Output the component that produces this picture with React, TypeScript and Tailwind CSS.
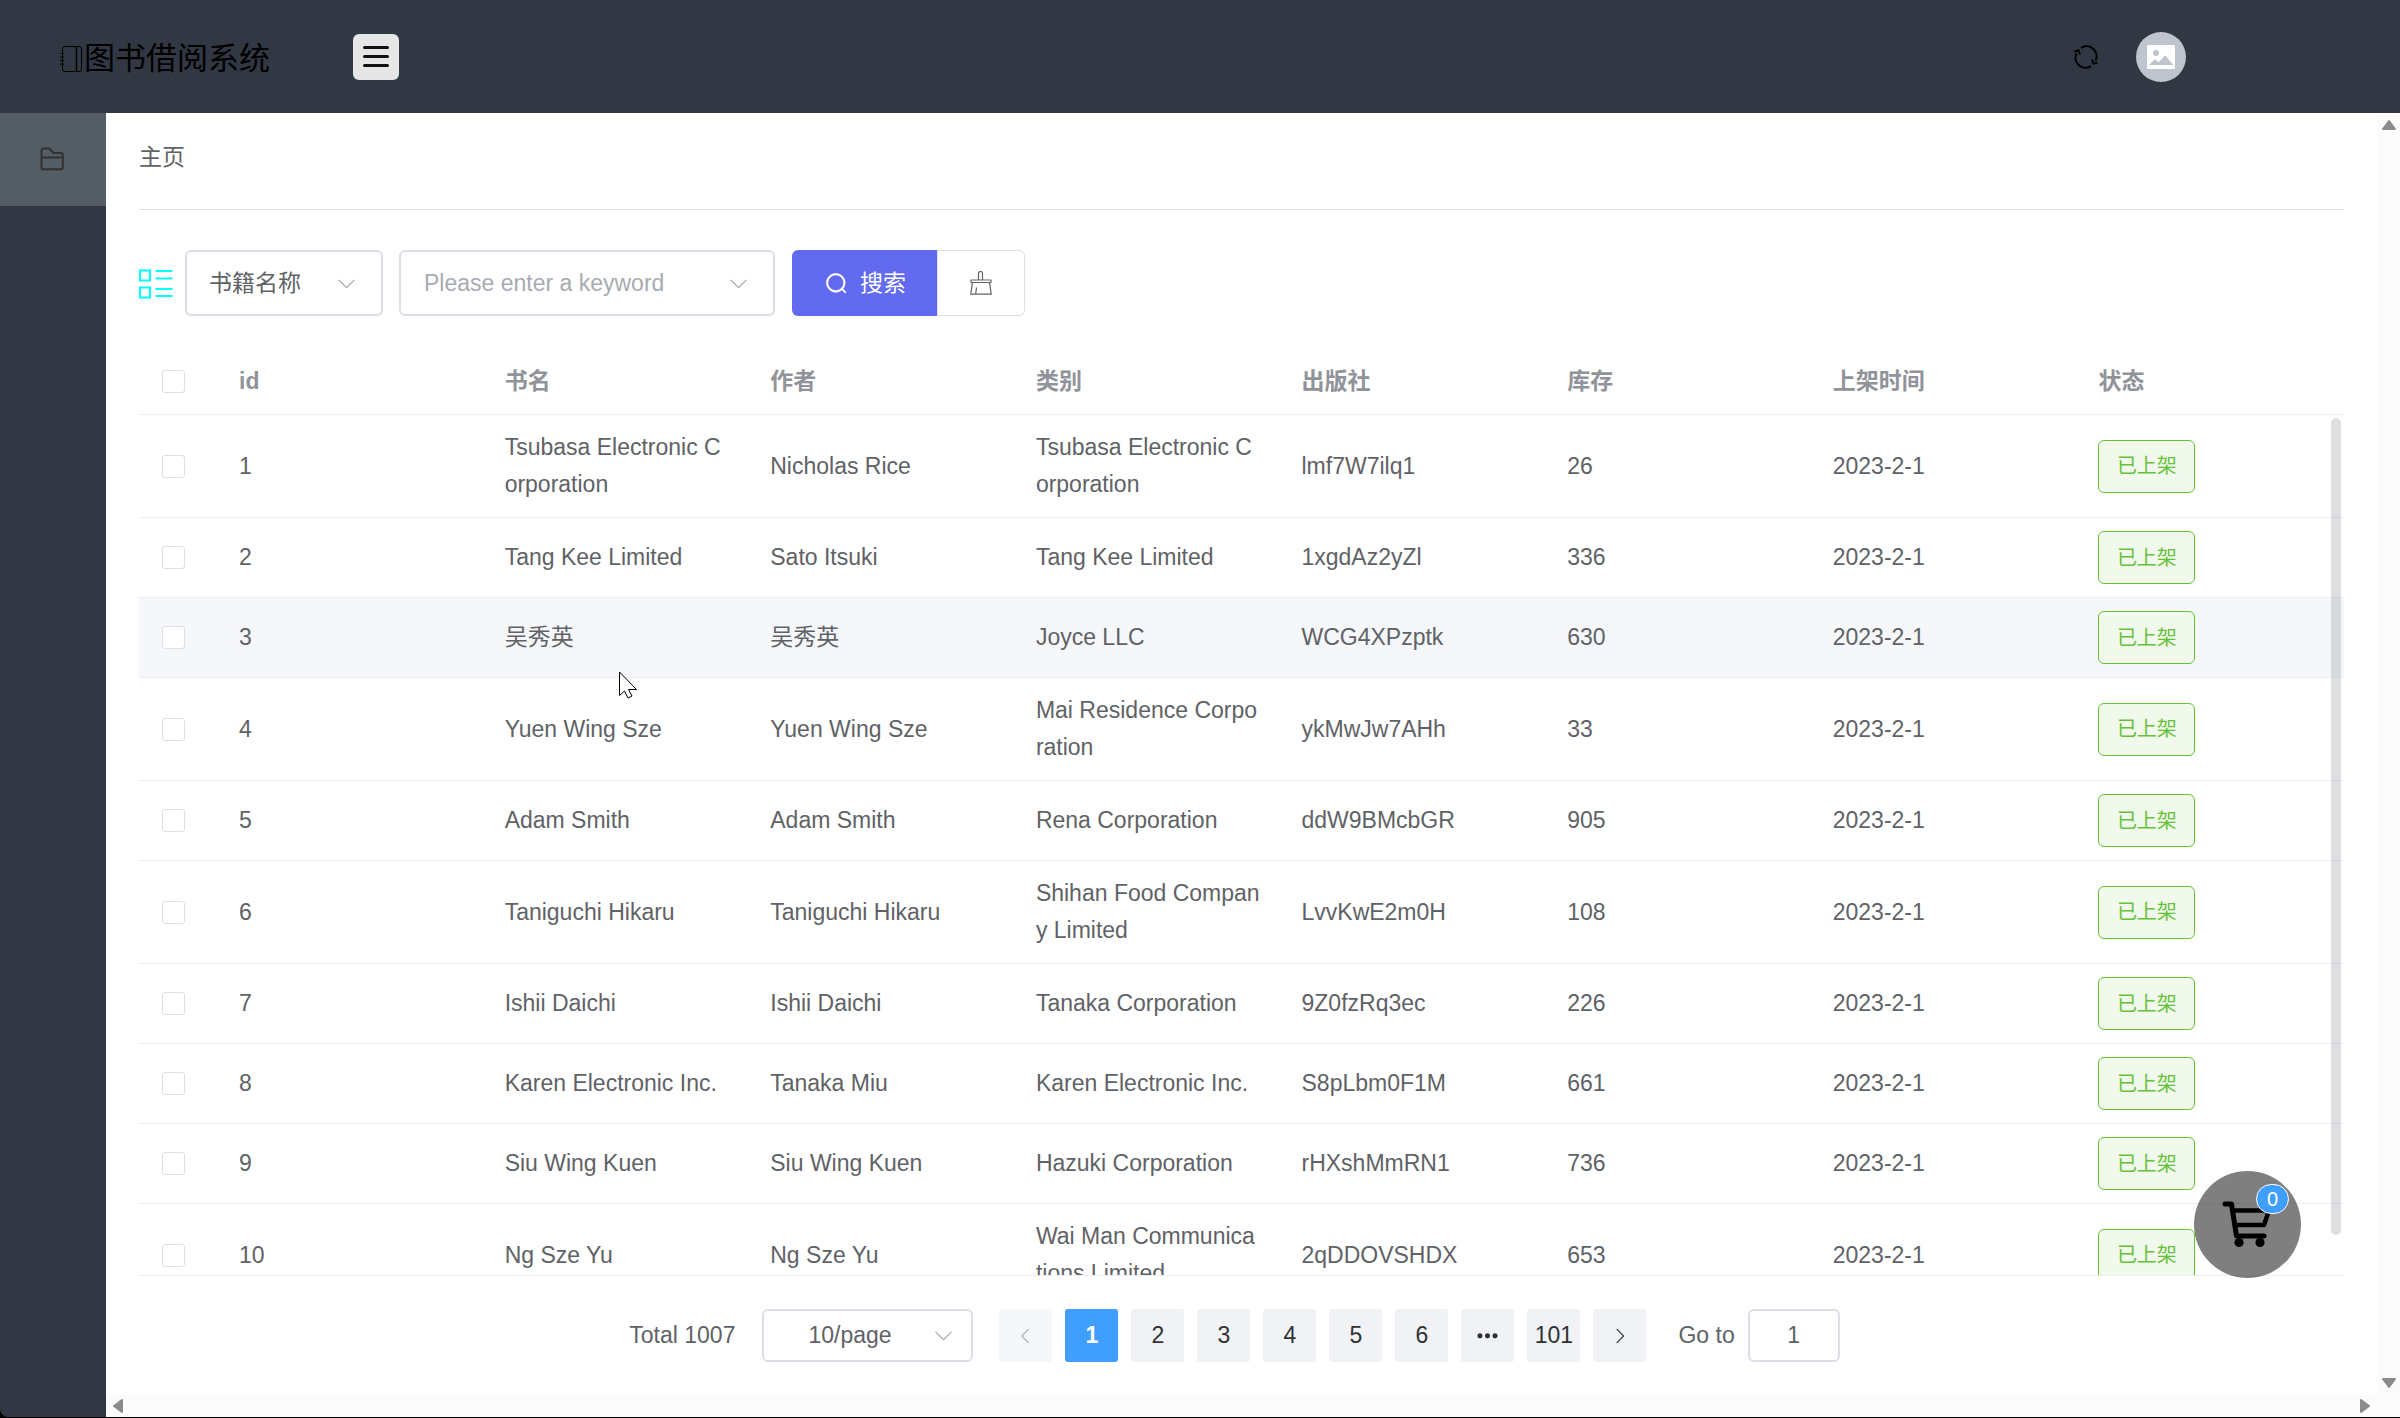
import React from "react";

const FONT = "font-['Liberation_Sans','Noto_Sans_CJK_SC',sans-serif]";

const COLUMNS = ["id", "书名", "作者", "类别", "出版社", "库存", "上架时间", "状态"];

const ROWS = [
  ["1", "Tsubasa Electronic Corporation", "Nicholas Rice", "Tsubasa Electronic Corporation", "lmf7W7ilq1", "26"],
  ["2", "Tang Kee Limited", "Sato Itsuki", "Tang Kee Limited", "1xgdAz2yZl", "336"],
  ["3", "吴秀英", "吴秀英", "Joyce LLC", "WCG4XPzptk", "630"],
  ["4", "Yuen Wing Sze", "Yuen Wing Sze", "Mai Residence Corporation", "ykMwJw7AHh", "33"],
  ["5", "Adam Smith", "Adam Smith", "Rena Corporation", "ddW9BMcbGR", "905"],
  ["6", "Taniguchi Hikaru", "Taniguchi Hikaru", "Shihan Food Company Limited", "LvvKwE2m0H", "108"],
  ["7", "Ishii Daichi", "Ishii Daichi", "Tanaka Corporation", "9Z0fzRq3ec", "226"],
  ["8", "Karen Electronic Inc.", "Tanaka Miu", "Karen Electronic Inc.", "S8pLbm0F1M", "661"],
  ["9", "Siu Wing Kuen", "Siu Wing Kuen", "Hazuki Corporation", "rHXshMmRN1", "736"],
  ["10", "Ng Sze Yu", "Ng Sze Yu", "Wai Man Communications Limited", "2qDDOVSHDX", "653"],
];

const PATHS = {
  down: "M831.872 340.864 512 652.672 192.128 340.864a30.592 30.592 0 0 0-42.752 0 29.12 29.12 0 0 0 0 41.6L489.664 714.24a32 32 0 0 0 44.672 0l340.288-331.712a29.12 29.12 0 0 0 0-41.728 30.592 30.592 0 0 0-42.752 0z",
  left: "M609.408 149.376 277.76 489.6a32 32 0 0 0 0 44.672l331.648 340.352a29.12 29.12 0 0 0 41.728 0 30.592 30.592 0 0 0 0-42.752L339.264 511.936l311.872-319.872a30.592 30.592 0 0 0 0-42.688 29.12 29.12 0 0 0-41.728 0z",
  right: "M340.864 149.312a30.592 30.592 0 0 0 0 42.752L652.736 512 340.864 831.872a30.592 30.592 0 0 0 0 42.752 29.12 29.12 0 0 0 41.728 0L714.24 534.336a32 32 0 0 0 0-44.672L382.592 149.376a29.12 29.12 0 0 0-41.728 0z",
  more: "M176 416a112 112 0 1 1 0 224 112 112 0 0 1 0-224zm336 0a112 112 0 1 1 0 224 112 112 0 0 1 0-224zm336 0a112 112 0 1 1 0 224 112 112 0 0 1 0-224z",
  search: "m795.904 750.72 124.992 124.928a32 32 0 0 1-45.248 45.248L750.656 795.904a416 416 0 1 1 45.248-45.248zM480 832a352 352 0 1 0 0-704 352 352 0 0 0 0 704z",
  picture: "M96 896a32 32 0 0 1-32-32V160a32 32 0 0 1 32-32h832a32 32 0 0 1 32 32v704a32 32 0 0 1-32 32H96zm315.52-228.48-68.928-68.928a32 32 0 0 0-45.248 0L128 768.064h778.688l-242.112-290.56a32 32 0 0 0-49.216 0L458.752 665.408a32 32 0 0 1-47.232 2.112zM256 384a96 96 0 1 0 192.064-.064A96 96 0 0 0 256 384z",
};

function Icon({ name, className }: { name: keyof typeof PATHS; className: string }) {
  return (
    <svg viewBox="0 0 1024 1024" fill="currentColor" className={className} aria-hidden="true">
      <path d={PATHS[name]} />
    </svg>
  );
}

function NotebookIcon() {
  return (
    <svg viewBox="0 0 24 28" className="h-7 w-6" fill="none" stroke="#000" aria-hidden="true">
      <rect x="2.5" y="1.5" width="19" height="25" rx="2.5" />
      <path d="M16.5 1.5v25" strokeWidth="1.5" />
      <path d="M0 8.5h4M0 12h4M0 15.5h4M0 19h4" strokeWidth="1.2" />
    </svg>
  );
}

function FolderIcon() {
  return (
    <svg viewBox="0 0 24 24" className="mr-[2px] mb-[2px] size-6" fill="none" stroke="#303133" strokeWidth="2" strokeLinejoin="round" aria-hidden="true">
      <path d="M1.500 20.500V3.500a2 2 0 0 1 2-2H9.500l4 4.500H21a1.800 1.800 0 0 1 1.800 1.800V20.500a1.800 1.800 0 0 1-1.800 1.800H3.500a2 2 0 0 1-2-1.800zM1.500 10.500h21.300" />
    </svg>
  );
}

function RefreshIcon() {
  return (
    <svg viewBox="0 0 24 24" className="size-6" fill="none" stroke="#000" strokeWidth="2" aria-hidden="true">
      <path d="M7 2.800A10 10 0 0 1 21.500 15.500M17 21.200A10 10 0 0 1 2.500 8.500" />
      <path d="M0.500 6.500l4-1 1.500 4M23.500 17.500l-4 1-1.500-4" />
    </svg>
  );
}

function ListIcon() {
  return (
    <svg viewBox="0 0 34 30" className="mt-[2px] h-[30px] w-[34px] shrink-0" fill="none" stroke="#00ffff" strokeWidth="2" aria-hidden="true">
      <path d="M1 1.500h10v10H1zM1 18.500h10v10H1zM16.500 2h17M16.500 9.500h17M16.500 20h17M16.500 27h17" />
    </svg>
  );
}

function BrushIcon() {
  return (
    <svg viewBox="0 0 24 24" className="size-6" fill="none" stroke="#606266" strokeWidth="1.200" strokeLinejoin="round" aria-hidden="true">
      <path d="M9.500 9V2.500a2 2 0 0 1 4 0V9M2 9h20v2.500H2zM3.500 11.500L1.800 23.200h20.400L20.500 11.500M7.500 16.500l-.8 6.500" />
    </svg>
  );
}

function CartIcon() {
  return (
    <svg viewBox="0 0 50 48" className="mr-[2px] mb-[2px] h-12 w-[50px]" fill="none" stroke="#000" strokeWidth="5" strokeLinecap="round" strokeLinejoin="round" aria-hidden="true">
      <path d="M3 4h6.500l5 32H42" />
      <path d="M11.500 10.500H47L42 25H13.500" strokeWidth="4.500" />
      <circle cx="17" cy="42.500" r="4.600" fill="#000" stroke="none" />
      <circle cx="38" cy="42.500" r="4.600" fill="#000" stroke="none" />
    </svg>
  );
}

function Triangle({ className }: { className: string }) {
  return (
    <svg viewBox="0 0 16 12" className={className} fill="#8b8b8b" stroke="#8b8b8b" strokeWidth="2" strokeLinejoin="round" aria-hidden="true">
      <path d="M8 2L14 10H2z" />
    </svg>
  );
}

function Checkbox({ label }: { label: string }) {
  return (
    <input
      type="checkbox"
      aria-label={label}
      className="block size-[23px] appearance-none rounded-[3px] border border-[#dcdfe6] bg-white"
    />
  );
}

function ColGroup() {
  return (
    <colgroup>
      <col className="w-20" />
      {COLUMNS.map((c) => (
        <col key={c} />
      ))}
    </colgroup>
  );
}

function BookTable() {
  return (
    <section className="relative mt-[33px] border-b border-[#ebeef5]">
      <table className="w-full table-fixed border-separate border-spacing-0 text-left">
        <ColGroup />
        <thead>
          <tr className="text-[#909399]">
            <th className="h-[66px] border-b border-[#ebeef5] pl-[23px]">
              <Checkbox label="全选" />
            </th>
            {COLUMNS.map((c) => (
              <th key={c} className="border-b border-[#ebeef5] px-5 font-bold">
                {c}
              </th>
            ))}
          </tr>
        </thead>
      </table>
      <div className="h-[860px] overflow-hidden">
        <table className="w-full table-fixed border-separate border-spacing-0 text-left">
          <ColGroup />
          <tbody>
            {ROWS.map((row) => (
              <tr key={row[0]} className={row[0] === "3" ? "bg-[#f5f7fa]" : "bg-white"}>
                <td className="border-b border-[#ebeef5] pl-[23px]">
                  <Checkbox label={"选择 " + row[0]} />
                </td>
                {[...row, "2023-2-1"].map((cell, i) => (
                  <td key={i} className="border-b border-[#ebeef5] py-[14px] pr-[21px] pl-5 leading-[37px] break-all">
                    {cell}
                  </td>
                ))}
                <td className="border-b border-[#ebeef5] px-5 py-[13px]">
                  <span className="flex h-[53px] w-[97px] items-center justify-center rounded-md border border-[#67c23a] bg-[#f0f9eb] text-xl text-[#67c23a]">
                    已上架
                  </span>
                </td>
              </tr>
            ))}
          </tbody>
        </table>
      </div>
      <div className="absolute top-[69px] right-[3px] bottom-10 w-[10px] rounded-full bg-[#909399]/30" />
    </section>
  );
}

function PageButton({ children, label, active, disabled }: { children: React.ReactNode; label?: string; active?: boolean; disabled?: boolean }) {
  const base = "flex size-[53px] items-center justify-center rounded-[3px] ";
  const tone = active
    ? "bg-[#409eff] font-bold text-white"
    : disabled
      ? "bg-[#f5f7fa] text-[#a8abb2]"
      : "bg-[#f0f2f5] text-[#303133]";
  return (
    <button type="button" aria-label={label} disabled={disabled} className={base + tone}>
      {children}
    </button>
  );
}

function Pagination() {
  return (
    <nav className="mt-[33px] flex items-center justify-center pr-[14px]">
      <span>Total 1007</span>
      <div className="relative ml-[27px] w-[211px]">
        <select aria-label="Page size" className="h-[53px] w-full appearance-none rounded-md border-2 border-[#dcdfe6] bg-white pl-11">
          <option>10/page</option>
        </select>
        <Icon name="down" className="pointer-events-none absolute top-[15px] right-[18px] size-[23px] text-[#a8abb2]" />
      </div>
      <div className="ml-[26px] flex gap-[13px]">
        <PageButton label="Previous page" disabled>
          <Icon name="left" className="size-5" />
        </PageButton>
        <PageButton active>1</PageButton>
        {["2", "3", "4", "5", "6"].map((n) => (
          <PageButton key={n}>{n}</PageButton>
        ))}
        <PageButton label="More pages">
          <Icon name="more" className="size-[23px]" />
        </PageButton>
        <PageButton>101</PageButton>
        <PageButton label="Next page">
          <Icon name="right" className="size-5" />
        </PageButton>
      </div>
      <label className="ml-8 flex items-center gap-[13px]">
        Go to
        <input defaultValue="1" className="h-[53px] w-[92px] rounded-md border-2 border-[#dcdfe6] bg-white text-center" />
      </label>
    </nav>
  );
}

function Filters() {
  return (
    <form className="mt-10 flex items-center" onSubmit={(e) => e.preventDefault()}>
      <ListIcon />
      <div className="relative ml-3 w-[198px]">
        <select aria-label="搜索字段" className="h-[66px] w-full appearance-none rounded-md border-2 border-[#dcdfe6] bg-white pl-[22px]">
          <option>书籍名称</option>
        </select>
        <Icon name="down" className="pointer-events-none absolute top-[22px] right-[25px] size-[23px] text-[#a8abb2]" />
      </div>
      <div className="relative ml-4 w-[376px]">
        <input
          aria-label="关键字"
          placeholder="Please enter a keyword"
          className="h-[66px] w-full rounded-md border-2 border-[#dcdfe6] bg-white pl-[23px] placeholder:text-[#a8abb2]"
        />
        <Icon name="down" className="pointer-events-none absolute top-[22px] right-[25px] size-[23px] text-[#a8abb2]" />
      </div>
      <button type="submit" className="ml-[17px] flex h-[66px] w-[145px] items-center justify-center gap-3 rounded-l-md bg-[#626aef] pl-[2px] text-white">
        <Icon name="search" className="size-[23px] stroke-current stroke-[30]" />
        搜索
      </button>
      <button type="reset" aria-label="清空" className="flex h-[66px] w-[88px] items-center justify-center rounded-r-md border border-[#dcdfe6] bg-white">
        <BrushIcon />
      </button>
    </form>
  );
}

export default function App() {
  return (
    <div className={"relative flex h-screen flex-col overflow-hidden border-b border-black bg-black text-[23px] leading-[37px] text-[#606266] " + FONT}>
      <header className="flex h-[113px] shrink-0 items-center bg-[#313743]">
        <div className="flex w-[353px] items-center pt-1 pl-[60px] text-[31px] text-black">
          <NotebookIcon />
          图书借阅系统
        </div>
        <button type="button" aria-label="菜单" className="flex size-[46px] flex-col items-center justify-center gap-[6px] rounded-md bg-[#e6e6e6]">
          <span className="h-[3px] w-[26px] rounded-full bg-[#111]" />
          <span className="h-[3px] w-[26px] rounded-full bg-[#111]" />
          <span className="h-[3px] w-[26px] rounded-full bg-[#111]" />
        </button>
        <div className="mr-[214px] ml-auto flex items-center gap-[38px]">
          <button type="button" aria-label="刷新">
            <RefreshIcon />
          </button>
          <button type="button" aria-label="用户" className="flex size-[50px] items-center justify-center rounded-full bg-[#c0c4cc] text-white">
            <Icon name="picture" className="size-8" />
          </button>
        </div>
      </header>
      <div className="flex min-h-0 flex-1">
        <aside className="w-[106px] shrink-0 rounded-bl-lg bg-[#313743]">
          <a href="#" aria-label="图书" className="flex h-[93px] items-center justify-center bg-[#545c64]">
            <FolderIcon />
          </a>
        </aside>
        <div className="flex min-w-0 flex-1 flex-col bg-white">
          <div className="flex min-h-0 flex-1">
            <main className="min-w-0 flex-1 overflow-hidden pt-[26px] pr-[33px] pl-[33px]">
              <h1>主页</h1>
              <hr className="mt-[33px] border-[#dcdfe6]" />
              <Filters />
              <BookTable />
              <Pagination />
            </main>
            <div className="flex w-[23px] shrink-0 flex-col items-center justify-between bg-[#fbfbfb] py-[6px]">
              <Triangle className="h-3 w-4" />
              <Triangle className="h-3 w-4 rotate-180" />
            </div>
          </div>
          <div className="flex h-[22px] shrink-0 items-center justify-between bg-[#fbfbfb] pr-[27px] pl-1">
            <Triangle className="h-3 w-4 -rotate-90" />
            <Triangle className="h-3 w-4 rotate-90" />
          </div>
        </div>
      </div>

      <button type="button" aria-label="购物车" className="absolute right-[99px] bottom-[139px] flex size-[107px] items-center justify-center rounded-full bg-black/50">
        <CartIcon />
        <span className="absolute top-[13px] right-3 flex h-[30px] w-[33px] items-center justify-center rounded-full border border-white bg-[#409eff] text-xl text-white">
          0
        </span>
      </button>

      <svg viewBox="0 0 19 28" className="pointer-events-none absolute top-[671px] left-[619px] h-7 w-[19px]" fill="#fff" stroke="#000" aria-hidden="true">
        <path d="M.5 1v23.500L5.500 20l3.500 7 4-2-3.500-6.500H17.500z" />
      </svg>
    </div>
  );
}
